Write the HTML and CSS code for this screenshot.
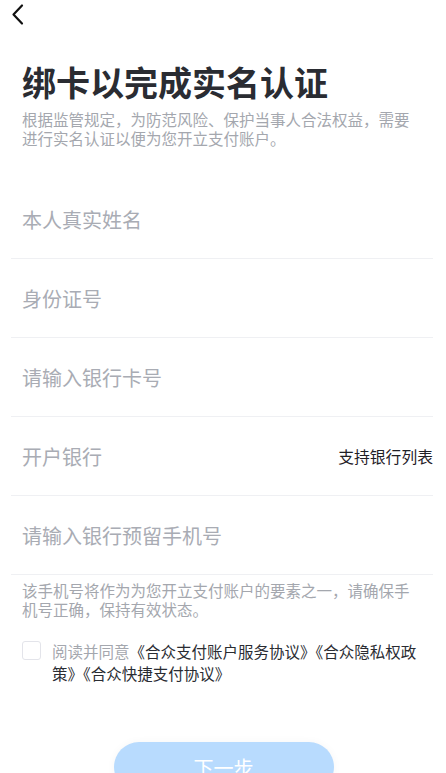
FILE: index.html
```html
<!DOCTYPE html>
<html lang="zh-CN">
<head>
<meta charset="utf-8">
<title>绑卡以完成实名认证</title>
<link rel="stylesheet" href="styles.css">
</head>
<body>
<div class="page">
  <div class="nav">
    <svg class="back" width="24" height="24" viewBox="0 0 24 24"><path d="M15 3.5 L6.5 12.5 L15 21.5" fill="none" stroke="#111" stroke-width="2.2" stroke-linecap="round" stroke-linejoin="round"/></svg>
  </div>
  <div class="intro">
    <h1 class="title">绑卡以完成实名认证</h1>
    <p class="desc">根据监管规定，为防范风险、保护当事人合法权益，需要进行实名认证以便为您开立支付账户。</p>
  </div>
  <div class="form">
    <div class="row"><span class="ph">本人真实姓名</span></div>
    <div class="row"><span class="ph">身份证号</span></div>
    <div class="row"><span class="ph">请输入银行卡号</span></div>
    <div class="row"><span class="ph">开户银行</span><span class="link">支持银行列表</span></div>
    <div class="row"><span class="ph">请输入银行预留手机号</span></div>
  </div>
  <p class="note">该手机号将作为为您开立支付账户的要素之一，请确保手机号正确，保持有效状态。</p>
  <div class="agree">
    <span class="check"></span>
    <p class="agree-text"><span class="muted">阅读并同意</span>《合众支付账户服务协议》《合众隐私权政策》《合众快捷支付协议》</p>
  </div>
  <div class="actions">
    <button class="next">下一步</button>
  </div>
</div>
</body>
</html>
```

FILE: styles.css
```css
html, body {
  margin: 0;
  padding: 0;
  background: #fff;
}
body {
  font-family: "Noto Sans CJK SC", "Noto Sans", sans-serif;
  width: 446px;
  height: 773px;
  overflow: hidden;
}
.page {
  display: flex;
  flex-direction: column;
}
.nav {
  height: 30px;
  padding-left: 7px;
  display: flex;
  align-items: flex-start;
  padding-top: 2px;
  box-sizing: border-box;
}
.back {
  display: block;
}
.intro {
  padding: 32px 22px 0 22px;
}
.title {
  margin: 0;
  font-size: 34px;
  line-height: 40px;
  font-weight: 700;
  color: #2a2c32;
}
.desc {
  margin: 8px 0 0 0;
  font-size: 15.5px;
  line-height: 18.5px;
  color: #a4a7ae;
}
.form {
  margin: 33px 13px 0 11px;
}
.row {
  height: 78px;
  border-bottom: 1px solid #eff0f3;
  display: flex;
  align-items: center;
  justify-content: space-between;
  padding-left: 11px;
}
.ph {
  font-size: 20px;
  color: #a9acb4;
}
.link {
  font-size: 15.8px;
  color: #1f2026;
}
.note {
  margin: 6px 0 0 0;
  padding: 0 22px;
  font-size: 15.5px;
  line-height: 18.5px;
  color: #a4a7ae;
}
.agree {
  display: flex;
  align-items: flex-start;
  padding: 0 18px 0 22px;
  margin-top: 22px;
}
.check {
  flex: none;
  width: 17px;
  height: 17px;
  border: 1px solid #e3e4ea;
  border-radius: 3px;
  margin-top: 1px;
  margin-right: 11px;
}
.agree-text {
  margin: 0;
  font-size: 15.5px;
  line-height: 22px;
  color: #2a2c32;
}
.muted {
  color: #a4a7ae;
}
.actions {
  display: flex;
  justify-content: center;
  margin-top: 58px;
  padding-left: 1px;
}
.next {
  width: 220px;
  height: 50px;
  border: none;
  border-radius: 25px;
  background: #b8dbfe;
  color: #fff;
  font-family: inherit;
  font-size: 20px;
  box-shadow: 0 0 8px rgba(0, 0, 0, 0.04);
}
```
